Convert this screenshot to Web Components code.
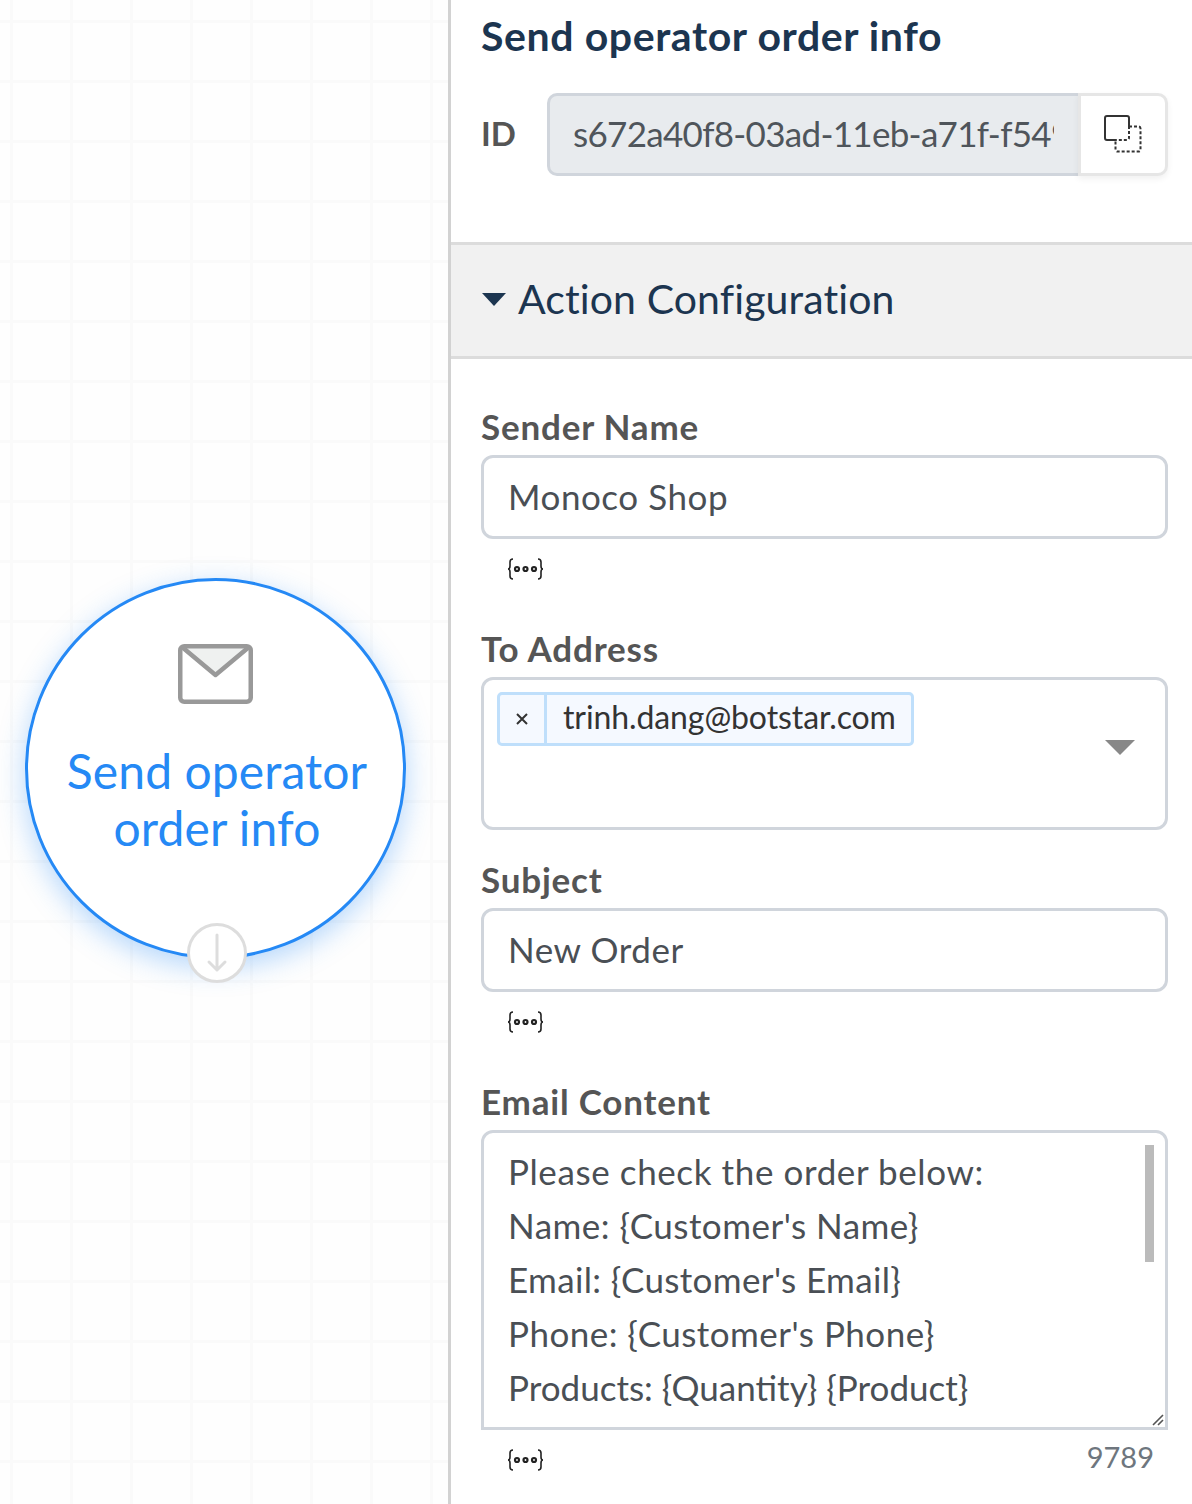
<!DOCTYPE html>
<html>
<head>
<meta charset="utf-8">
<style>
    html, body { margin: 0; height: 100%; overflow: hidden; background: #fff; }
    body { font-family: Lato, "Open Sans", sans-serif; }
    app-shell { height: 1504px; }
</style>
</head>
<body>
<app-shell>
    <flow-canvas slot="canvas">
        <flow-node>Send operator<br>order info</flow-node>
    </flow-canvas>
    <side-panel slot="panel" heading="Send operator order info">
        <id-field slot="head" value="s672a40f8-03ad-11eb-a71f-f549"></id-field>
        <section-header>Action Configuration</section-header>
        <form-field label="Sender Name" vars>
            <text-box>Monoco Shop</text-box>
        </form-field>
        <form-field label="To Address">
            <tag-select>trinh.dang@botstar.com</tag-select>
        </form-field>
        <form-field label="Subject" vars>
            <text-box>New Order</text-box>
        </form-field>
        <form-field label="Email Content" vars count="9789">
            <text-area>
                <div style="letter-spacing: .6px">Please check the order below:</div>
                <div style="letter-spacing: .48px">Name: {Customer's Name}</div>
                <div style="letter-spacing: .36px">Email: {Customer's Email}</div>
                <div style="letter-spacing: .48px">Phone: {Customer's Phone}</div>
                <div>Products: {Quantity} {Product}</div>
            </text-area>
        </form-field>
    </side-panel>
</app-shell>

<script>
class AppShell extends HTMLElement {
    constructor() {
        super();
        this.attachShadow({ mode: 'open' });
        this.shadowRoot.innerHTML = `
            <style>
                :host { display: flex; width: 100%; overflow: hidden; }
                .left { flex: 0 0 448px; }
                .right { flex: 1; min-width: 0; border-left: 3px solid #d2d2d2; }
            </style>
            <div class="left"><slot name="canvas"></slot></div>
            <div class="right"><slot name="panel"></slot></div>
        `;
    }
}
customElements.define('app-shell', AppShell);

class FlowCanvas extends HTMLElement {
    constructor() {
        super();
        this.attachShadow({ mode: 'open' });
        this.shadowRoot.innerHTML = `
            <style>
                :host {
                    display: block;
                    position: relative;
                    height: 1504px;
                    background-color: #fefefe;
                    background-image:
                        linear-gradient(to right, #fafafa 3px, transparent 3px),
                        linear-gradient(to bottom, #fafafa 3px, transparent 3px);
                    background-size: 60px 60px;
                    background-position: 10px 20px;
                }
            </style>
            <slot></slot>
        `;
    }
}
customElements.define('flow-canvas', FlowCanvas);

class FlowNode extends HTMLElement {
    constructor() {
        super();
        this.attachShadow({ mode: 'open' });
        this.shadowRoot.innerHTML = `
            <style>
                :host {
                    display: block;
                    position: absolute;
                    left: 25px;
                    top: 578px;
                    width: 381px;
                    height: 381px;
                    box-sizing: border-box;
                    border: 3px solid #2589f5;
                    border-radius: 50%;
                    background: #fff;
                    box-shadow: 0 8px 28px rgba(37, 137, 245, 0.34);
                    text-align: center;
                }
                .icon { position: absolute; left: 150px; top: 63px; }
                .name {
                    position: absolute;
                    left: 3px; right: 0; top: 161px;
                    font-size: 48px;
                    letter-spacing: .1px;
                    line-height: 57px;
                    color: #2589f5;
                }
                .out {
                    position: absolute;
                    left: 159px; top: 342px;
                    width: 60px; height: 60px;
                    box-sizing: border-box;
                    border: 3px solid #ddd;
                    border-radius: 50%;
                    background: #fff;
                }
            </style>
            <svg class="icon" width="75" height="60" viewBox="0 0 75 60">
                <path d="M6 3 L37.5 30 L69 3Z" fill="#eff1f0"/>
                <rect x="2.25" y="2.25" width="70.5" height="55.5" rx="4" fill="none" stroke="#999" stroke-width="4.5"/>
                <path d="M4 3 L37.5 31 L71 3" fill="none" stroke="#999" stroke-width="4.5" stroke-linejoin="round"/>
            </svg>
            <div class="name"><slot></slot></div>
            <div class="out">
                <svg width="54" height="54" viewBox="0 0 54 54">
                    <path d="M27 9 V44 M19 36 L27 44 L35 36" fill="none" stroke="#ddd" stroke-width="3" stroke-linecap="round" stroke-linejoin="round"/>
                </svg>
            </div>
        `;
    }
}
customElements.define('flow-node', FlowNode);

class SidePanel extends HTMLElement {
    constructor() {
        super();
        this.attachShadow({ mode: 'open' });
        this.shadowRoot.innerHTML = `
            <style>
                :host { display: block; color: #4a4f55; }
                .top { padding: 15px 24px 66px 30px; }
                h1 {
                    margin: 0 0 36px;
                    font-size: 41px;
                    letter-spacing: .6px;
                    line-height: 42px;
                    font-weight: 700;
                    color: #1c3550;
                }
            </style>
            <div class="top">
                <h1></h1>
                <slot name="head"></slot>
            </div>
            <slot></slot>
        `;
        this.shadowRoot.querySelector('h1').textContent = this.getAttribute('heading');
    }
}
customElements.define('side-panel', SidePanel);

class IdField extends HTMLElement {
    constructor() {
        super();
        this.attachShadow({ mode: 'open' });
        this.shadowRoot.innerHTML = `
            <style>
                :host { display: flex; align-items: center; height: 83px; }
                .label { flex: 0 0 66px; padding-bottom: 3px; font-size: 33px; font-weight: 700; color: #555; }
                .box { flex: 1; min-width: 0; display: flex; height: 100%; }
                .value {
                    flex: 1;
                    min-width: 0;
                    box-sizing: border-box;
                    padding: 0 24px 3px 23px;
                    display: flex;
                    align-items: center;
                    background: #e8ebee;
                    border: 3px solid #d0d5dc;
                    border-right: none;
                    border-radius: 10px 0 0 10px;
                    font-size: 35px;
                    letter-spacing: -.7px;
                    color: #4f555b;
                }
                .value span { display: block; width: 100%; overflow: hidden; white-space: nowrap; }
                button {
                    flex: 0 0 90px;
                    padding: 0 0 1px;
                    background: #fff;
                    border: 3px solid #e6e6e6;
                    border-radius: 0 10px 10px 0;
                    box-shadow: 0 3px 6px rgba(0, 0, 0, 0.06);
                    display: flex;
                    align-items: center;
                    justify-content: center;
                }
            </style>
            <div class="label">ID</div>
            <div class="box">
                <div class="value"><span></span></div>
                <button>
                    <svg width="38" height="38" viewBox="0 0 38 38" fill="none">
                        <path d="M25 11.5 H34.5 a2 2 0 0 1 2 2 V34.5 a2 2 0 0 1 -2 2 H13.5 a2 2 0 0 1 -2 -2 V25" stroke="#333" stroke-width="2" stroke-dasharray="3 2"/>
                        <path d="M25 11 V23 a2 2 0 0 1 -2 2 H12" stroke="#333" stroke-width="2" stroke-dasharray="3 2"/>
                        <path d="M12 25 H3 a2 2 0 0 1 -2 -2 V3 a2 2 0 0 1 2 -2 H23 a2 2 0 0 1 2 2 V11" stroke="#333" stroke-width="2"/>
                    </svg>
                </button>
            </div>
        `;
        this.shadowRoot.querySelector('.value span').textContent = this.getAttribute('value');
    }
}
customElements.define('id-field', IdField);

class SectionHeader extends HTMLElement {
    constructor() {
        super();
        this.attachShadow({ mode: 'open' });
        this.shadowRoot.innerHTML = `
            <style>
                :host {
                    display: flex;
                    align-items: center;
                    gap: 12px;
                    height: 117px;
                    box-sizing: border-box;
                    margin-bottom: 49px;
                    padding: 0 0 4px 31px;
                    background: #f1f1f1;
                    border-top: 3px solid #dcdcdc;
                    border-bottom: 3px solid #dcdcdc;
                    font-size: 41px;
                    letter-spacing: .1px;
                    color: #1c3550;
                }
                svg { display: block; margin-top: 2px; }
            </style>
            <svg width="24" height="13" viewBox="0 0 24 13"><path d="M0 0 H24 L12 13Z" fill="#1c3550"/></svg>
            <slot></slot>
        `;
    }
}
customElements.define('section-header', SectionHeader);

class FormField extends HTMLElement {
    constructor() {
        super();
        this.attachShadow({ mode: 'open' });
        const vars = this.hasAttribute('vars');
        const count = this.getAttribute('count');
        this.shadowRoot.innerHTML = `
            <style>
                :host { display: block; margin: 0 24px 31px 30px; }
                label {
                    display: block;
                    height: 47px;
                    line-height: 37px;
                    font-size: 35px;
                    letter-spacing: .8px;
                    font-weight: 700;
                    color: #555;
                }
                .foot {
                    display: flex;
                    align-items: center;
                    justify-content: space-between;
                    height: 60px;
                    padding: 0 14px 0 26px;
                }
                .count { margin-bottom: 8px; font-size: 29px; color: #6e767e; }
            </style>
            <label>${this.getAttribute('label')}</label>
            <slot></slot>
            ${vars ? `<div class="foot">
                <svg width="38" height="24" viewBox="0 0 38 24" fill="none" stroke="#222" stroke-width="1.6">
                    <path d="M6 2 Q3 2 3 5 V9 Q3 12 1 12 Q3 12 3 15 V19 Q3 22 6 22"/>
                    <path d="M31 2 Q34 2 34 5 V9 Q34 12 36 12 Q34 12 34 15 V19 Q34 22 31 22"/>
                    <g stroke-width="2.2"><circle cx="10" cy="12" r="2"/><circle cx="18.5" cy="12" r="2"/><circle cx="27" cy="12" r="2"/></g>
                </svg>
                ${count ? `<span class="count">${count}</span>` : ''}
            </div>` : ''}
        `;
    }
}
customElements.define('form-field', FormField);

class TextBox extends HTMLElement {
    constructor() {
        super();
        this.attachShadow({ mode: 'open' });
        this.shadowRoot.innerHTML = `
            <style>
                :host {
                    display: flex;
                    align-items: center;
                    height: 84px;
                    box-sizing: border-box;
                    padding: 0 24px 3px;
                    border: 3px solid #d0d5dc;
                    border-radius: 12px;
                    background: #fff;
                    font-size: 35px;
                    letter-spacing: .55px;
                    color: #4a4f55;
                }
            </style>
            <slot></slot>
        `;
    }
}
customElements.define('text-box', TextBox);

class TagSelect extends HTMLElement {
    constructor() {
        super();
        this.attachShadow({ mode: 'open' });
        this.shadowRoot.innerHTML = `
            <style>
                :host {
                    display: block;
                    position: relative;
                    height: 153px;
                    box-sizing: border-box;
                    padding: 12px 13px;
                    border: 3px solid #d0d5dc;
                    border-radius: 12px;
                    background: #fff;
                }
                .tag {
                    display: inline-flex;
                    height: 54px;
                    box-sizing: border-box;
                    background: #f5f9ff;
                    border: 3px solid #bfdffb;
                    border-radius: 5px;
                    font-size: 32px;
                    letter-spacing: -.1px;
                    color: #333;
                }
                .x {
                    flex: 0 0 47px;
                    display: flex;
                    align-items: center;
                    justify-content: center;
                    border-right: 3px solid #bfdffb;
                    box-sizing: border-box;
                }
                .text { padding: 0 15px 0 16px; line-height: 44px; }
                .arrow { position: absolute; right: 30px; top: 60px; }
            </style>
            <span class="tag">
                <span class="x">
                    <svg width="14" height="14" viewBox="0 0 14 14"><path d="M2 2 L12 12 M12 2 L2 12" stroke="#333" stroke-width="2"/></svg>
                </span>
                <span class="text"><slot></slot></span>
            </span>
            <svg class="arrow" width="30" height="15" viewBox="0 0 30 15"><path d="M0 0 H30 L15 15Z" fill="#888"/></svg>
        `;
    }
}
customElements.define('tag-select', TagSelect);

class TextArea extends HTMLElement {
    constructor() {
        super();
        this.attachShadow({ mode: 'open' });
        this.shadowRoot.innerHTML = `
            <style>
                :host {
                    display: block;
                    position: relative;
                    height: 300px;
                    box-sizing: border-box;
                    overflow: hidden;
                    padding: 11px 24px;
                    border: 3px solid #d0d5dc;
                    border-radius: 12px 12px 0 0;
                    background: #fff;
                    font-size: 35px;
                    line-height: 54px;
                    color: #4a4f55;
                }
                .thumb {
                    position: absolute;
                    right: 11px; top: 12px;
                    width: 9px; height: 117px;
                    background: #bbb;
                }
                .grip { position: absolute; right: 0; bottom: 0; }
            </style>
            <slot></slot>
            <div class="thumb"></div>
            <svg class="grip" width="14" height="14" viewBox="0 0 14 14"><path d="M2 12 L12 2 M7 12 L12 7" stroke="#555" stroke-width="1.6"/></svg>
        `;
    }
}
customElements.define('text-area', TextArea);
</script>
</body>
</html>
